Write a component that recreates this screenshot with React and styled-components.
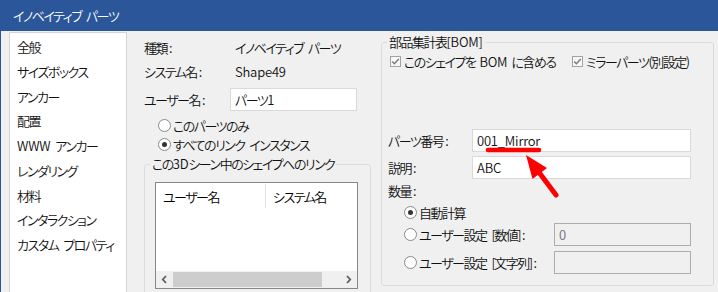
import React from "react";
import styled, { createGlobalStyle } from "styled-components";

const Global = createGlobalStyle`
  html, body { margin: 0; padding: 0; background: #f0f0f0; }
  *, *::before, *::after { box-sizing: border-box; }
`;

const FONT = `"Noto Sans CJK JP", "Noto Sans", sans-serif`;

const Window = styled.div`
  position: relative;
  width: 718px;
  height: 292px;
  overflow: hidden;
  background: #f0f0f0;
  border-left: 1px solid #2b579a;
  font-family: ${FONT};
  font-size: 13px;
  font-weight: 350;
  letter-spacing: -1.5px;
  word-spacing: 3.5px;
  font-feature-settings: "palt";
  color: #000;
  display: flex;
  flex-direction: column;
`;

const Lat = styled.span`
  letter-spacing: -0.2px;
  margin: 0 ${(p) => (p.$gap ? "4px" : "0")};
`;

const Colon = styled.span`
  letter-spacing: 0;
  margin-left: 2px;
`;

const TitleBar = styled.div`
  height: 31px;
  flex: none;
  background: #2b579a;
  color: #fff;
  padding-left: 12px;
  display: flex;
  align-items: center;
  font-size: 13px;
`;

const Body = styled.div`
  flex: 1;
  display: flex;
  align-items: flex-start;
`;

const Sidebar = styled.div`
  margin: 1px 0 0 8px;
  width: 118px;
  height: 270px;
  background: #fff;
  border: 1px solid #d5d5d5;
  border-bottom: none;
  padding-top: 2px;
`;

const SideItem = styled.div`
  height: 24.75px;
  line-height: 24.75px;
  padding-left: 7px;
  white-space: nowrap;
  color: #111;
`;

const Middle = styled.div`
  margin-left: 17px;
  width: 227px;
  padding-top: 4px;
  display: flex;
  flex-direction: column;
`;

const InfoRow = styled.div`
  display: grid;
  grid-template-columns: 86px 1fr;
  align-items: center;
  height: ${(p) => p.$h || 24}px;
  margin-top: ${(p) => p.$mt || 0}px;
`;

const Label = styled.span`
  white-space: nowrap;
  color: #111;
  &::after {
    content: ":";
    margin-left: 2px;
    letter-spacing: 0;
  }
`;

const Value = styled.span`
  padding-left: 5px;
  white-space: nowrap;
  color: #111;
`;

const TextBox = styled.div`
  height: 23px;
  width: ${(p) => p.$w}px;
  border: 1px solid ${(p) => (p.$disabled ? "#adadad" : "#d9d9d9")};
  background: ${(p) => (p.$disabled ? "#f0f0f0" : "#fff")};
  color: ${(p) => (p.$disabled ? "#6d6d6d" : "#111")};
  padding-left: 4px;
  display: flex;
  align-items: center;
  white-space: nowrap;
`;

const RadioRow = styled.label`
  display: flex;
  align-items: center;
  height: ${(p) => p.$h || 19}px;
  margin-left: ${(p) => p.$ml || 0}px;
  margin-top: ${(p) => p.$mt || 0}px;
  white-space: pre;
  color: #111;
`;

const RadioCircle = styled.span`
  width: 13px;
  height: 13px;
  flex: none;
  border-radius: 50%;
  border: 1px solid #8a8a8a;
  background: #fff;
  display: flex;
  align-items: center;
  justify-content: center;
  margin-right: 2px;
  &::after {
    content: "";
    width: 5px;
    height: 5px;
    border-radius: 50%;
    background: ${(p) => (p.$checked ? "#333" : "transparent")};
  }
`;

const GroupBox = styled.fieldset`
  margin: ${(p) => p.$margin || 0};
  width: ${(p) => p.$w}px;
  height: ${(p) => p.$h}px;
  border: 1px solid #dcdcdc;
  border-radius: 3px;
  padding: ${(p) => p.$pad};
  min-width: 0;
  flex: none;
`;

const Legend = styled.legend`
  padding: 0 2px;
  margin-left: ${(p) => p.$ml || 0}px;
  line-height: 18px;
  height: 18px;
  color: #111;
  white-space: nowrap;
`;

const ListView = styled.div`
  width: 203px;
  height: 107px;
  border: 1px solid #828790;
  background: #fff;
  display: flex;
  flex-direction: column;
`;

const ListHeader = styled.div`
  height: 25px;
  display: flex;
  padding-top: 1px;
`;

const HeaderCell = styled.div`
  width: ${(p) => (p.$w ? `${p.$w}px` : "auto")};
  flex: ${(p) => (p.$w ? "none" : 1)};
  padding-left: 7px;
  display: flex;
  align-items: center;
  border-right: ${(p) => (p.$sep ? "1px solid #e5e5e5" : "none")};
  color: #000;
  white-space: nowrap;
`;

const ListBody = styled.div`
  flex: 1;
`;

const HScroll = styled.div`
  height: 17px;
  background: #f0f0f0;
  display: flex;
  align-items: center;
`;

const ScrollArrow = styled.div`
  width: 17px;
  height: 17px;
  flex: none;
  display: flex;
  align-items: center;
  justify-content: center;
`;

const Thumb = styled.div`
  width: 149px;
  height: 15px;
  background: #cdcdcd;
  flex: none;
`;

const ScrollSpace = styled.div`
  flex: 1;
`;

const CheckRow = styled.div`
  display: grid;
  grid-template-columns: 182px auto;
  height: 20px;
  margin-left: 2px;
  align-items: center;
`;

const CheckItem = styled.label`
  display: flex;
  align-items: center;
  white-space: nowrap;
  color: #111;
`;

const CheckBox = styled.span`
  width: 11px;
  height: 11px;
  flex: none;
  border: 1px solid #a3a3a3;
  background: #f7f7f7;
  margin-right: 3px;
  display: flex;
  align-items: center;
  justify-content: center;
`;

const FormRow = styled.div`
  display: grid;
  grid-template-columns: ${(p) => p.$cols};
  align-items: center;
  height: ${(p) => p.$h || 23}px;
  margin-top: ${(p) => p.$mt || 0}px;
  margin-left: ${(p) => p.$ml || 0}px;
`;

const Overlay = styled.svg`
  position: absolute;
  left: -1px;
  top: 0;
  width: 718px;
  height: 292px;
  pointer-events: none;
`;

const Check = () => (
  <svg width="9" height="9" viewBox="0 0 9 9">
    <polyline points="1.2,4.6 3.4,6.8 7.8,2" fill="none" stroke="#7a7a7a" strokeWidth="1.4" />
  </svg>
);

const Chevron = ({ dir }) => (
  <svg width="7" height="9" viewBox="0 0 7 9">
    <polyline
      points={dir === "left" ? "5,1 1.8,4.5 5,8" : "2,1 5.2,4.5 2,8"}
      fill="none"
      stroke="#606060"
      strokeWidth="1.8"
    />
  </svg>
);

const sideItems = [
  "全般",
  "サイズボックス",
  "アンカー",
  "配置",
  <>
    <Lat>WWW</Lat> アンカー
  </>,
  "レンダリング",
  "材料",
  "インタラクション",
  "カスタム プロパティ",
];

export default function App() {
  return (
    <>
      <Global />
      <Window>
        <TitleBar>イノベイティブ パーツ</TitleBar>
        <Body>
          <Sidebar>
            {sideItems.map((s, i) => (
              <SideItem key={i}>{s}</SideItem>
            ))}
          </Sidebar>

          <Middle>
            <InfoRow>
              <Label>種類</Label>
              <Value>イノベイティブ パーツ</Value>
            </InfoRow>
            <InfoRow>
              <Label>システム名</Label>
              <Value>
                <Lat>Shape49</Lat>
              </Value>
            </InfoRow>
            <InfoRow $h={23} $mt={5}>
              <Label>ユーザー名</Label>
              <TextBox $w={127}>
                パーツ<Lat>1</Lat>
              </TextBox>
            </InfoRow>
            <RadioRow $ml={14} $mt={5}>
              <RadioCircle />
              このパーツのみ
            </RadioRow>
            <RadioRow $ml={14}>
              <RadioCircle $checked />
              すべてのリンク インスタンス
            </RadioRow>
            <GroupBox $w={227} $h={150} $pad="9px 0 0 10px" $margin="1px 0 0 0">
              <Legend $ml={-5}>
                この<Lat>3D</Lat>シーン中のシェイプへのリンク
              </Legend>
              <ListView>
                <ListHeader>
                  <HeaderCell $w={110} $sep>
                    ユーザー名
                  </HeaderCell>
                  <HeaderCell>システム名</HeaderCell>
                </ListHeader>
                <ListBody />
                <HScroll>
                  <ScrollArrow>
                    <Chevron dir="left" />
                  </ScrollArrow>
                  <Thumb />
                  <ScrollSpace />
                  <ScrollArrow>
                    <Chevron dir="right" />
                  </ScrollArrow>
                </HScroll>
              </ListView>
            </GroupBox>
          </Middle>

          <GroupBox $w={333} $h={253} $pad="0 0 0 6px" $margin="2px 0 0 10px">
            <Legend $ml={-1}>
              部品集計表<Lat>[BOM]</Lat>
            </Legend>
            <CheckRow>
              <CheckItem>
                <CheckBox>
                  <Check />
                </CheckBox>
                このシェイプを<Lat $gap>BOM</Lat>に含める
              </CheckItem>
              <CheckItem>
                <CheckBox>
                  <Check />
                </CheckBox>
                ミラーパーツ(別設定)
              </CheckItem>
            </CheckRow>
            <FormRow $cols="84px 219px" $mt={58}>
              <Label>パーツ番号</Label>
              <TextBox $w={219}>
                <Lat>001_Mirror</Lat>
              </TextBox>
            </FormRow>
            <FormRow $cols="84px 219px" $mt={4}>
              <Label>説明</Label>
              <TextBox $w={219}>
                <Lat>ABC</Lat>
              </TextBox>
            </FormRow>
            <FormRow $cols="1fr" $h={20} $mt={1}>
              <Label>数量</Label>
            </FormRow>
            <RadioRow $ml={16} $mt={2} $h={20}>
              <RadioCircle $checked />
              自動計算
            </RadioRow>
            <FormRow $cols="150px 137px" $ml={16} $mt={1}>
              <RadioRow>
                <RadioCircle />
                ユーザー設定 [数値]<Colon>:</Colon>
              </RadioRow>
              <TextBox $w={137} $disabled>
                <Lat>0</Lat>
              </TextBox>
            </FormRow>
            <FormRow $cols="150px 137px" $ml={16} $mt={5}>
              <RadioRow>
                <RadioCircle />
                ユーザー設定 [文字列]<Colon>:</Colon>
              </RadioRow>
              <TextBox $w={137} $disabled />
            </FormRow>
          </GroupBox>
        </Body>

        <Overlay viewBox="0 0 718 292">
          <line x1="488" y1="150" x2="539" y2="150" stroke="#ff0000" strokeWidth="4.5" strokeLinecap="round" />
          <line x1="556" y1="195" x2="538" y2="171" stroke="#ff0000" strokeWidth="5" strokeLinecap="round" />
          <polygon points="526,155 532.5,179 547,168" fill="#ff0000" />
        </Overlay>
      </Window>
    </>
  );
}
